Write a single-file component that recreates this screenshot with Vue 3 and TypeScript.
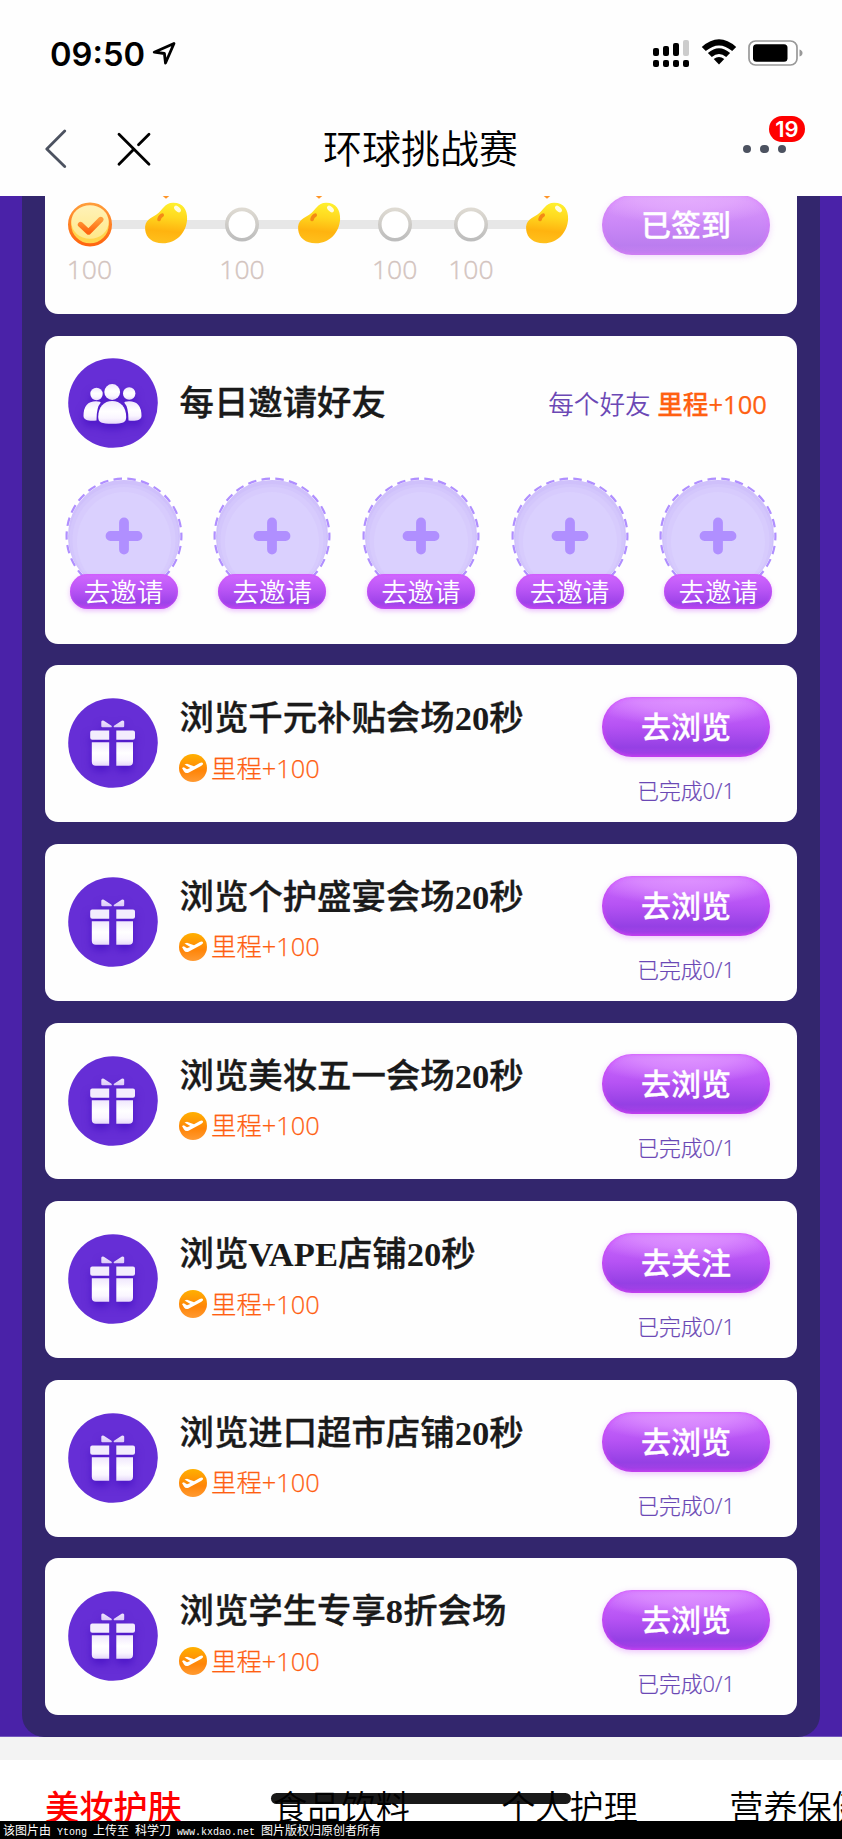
<script setup lang="ts">
interface Task {
  title: { text: string; latin?: boolean }[]
  action: string
}

const days = ['checked', 'bean', 'empty', 'bean', 'empty', 'empty', 'bean']
const invites = [1, 2, 3, 4, 5]
const tasks: Task[] = [
  { title: [{ text: '浏览千元补贴会场' }, { text: '20', latin: true }, { text: '秒' }], action: '去浏览' },
  { title: [{ text: '浏览个护盛宴会场' }, { text: '20', latin: true }, { text: '秒' }], action: '去浏览' },
  { title: [{ text: '浏览美妆五一会场' }, { text: '20', latin: true }, { text: '秒' }], action: '去浏览' },
  { title: [{ text: '浏览' }, { text: 'VAPE', latin: true }, { text: '店铺' }, { text: '20', latin: true }, { text: '秒' }], action: '去关注' },
  { title: [{ text: '浏览进口超市店铺' }, { text: '20', latin: true }, { text: '秒' }], action: '去浏览' },
  { title: [{ text: '浏览学生专享' }, { text: '8', latin: true }, { text: '折会场' }], action: '去浏览' },
]
const tabs = ['美妆护肤', '食品饮料', '个人护理', '营养保健']
</script>

<template>
  <div class="screen">
    <svg class="defs" width="0" height="0">
      <defs>
        <linearGradient id="bean" x1="0.55" y1="0" x2="0.45" y2="1">
          <stop offset="0" stop-color="#fff02e" /><stop offset="0.35" stop-color="#ffd81f" />
          <stop offset="0.7" stop-color="#ffb30f" /><stop offset="1" stop-color="#ffc01c" />
        </linearGradient>
        <linearGradient id="coin" x1="0" y1="0" x2="0" y2="1">
          <stop offset="0" stop-color="#ff9c3a" /><stop offset="1" stop-color="#ff650f" />
        </linearGradient>
        <linearGradient id="coinFill" x1="0" y1="0" x2="0" y2="1">
          <stop offset="0" stop-color="#fff2b8" /><stop offset="1" stop-color="#ffe88a" />
        </linearGradient>
        <linearGradient id="ring" x1="0" y1="0" x2="0" y2="1">
          <stop offset="0" stop-color="#dedad2" /><stop offset="1" stop-color="#bdbdbd" />
        </linearGradient>
        <linearGradient id="mile" x1="0" y1="0" x2="0" y2="1">
          <stop offset="0" stop-color="#ffb000" /><stop offset="0.6" stop-color="#ff8508" /><stop offset="1" stop-color="#ff9a32" />
        </linearGradient>
        <linearGradient id="soft" x1="0" y1="0" x2="0" y2="1">
          <stop offset="0" stop-color="#f0e7fd" /><stop offset="0.45" stop-color="#ffffff" /><stop offset="0.75" stop-color="#faf6ff" /><stop offset="1" stop-color="#e6d8fa" />
        </linearGradient>
        <linearGradient id="bow" x1="0" y1="0" x2="0" y2="1">
          <stop offset="0" stop-color="#eee4fd" /><stop offset="1" stop-color="#dccbf8" />
        </linearGradient>
      </defs>
    </svg>

    <header class="top">
      <div class="status">
        <span class="clock">09:50</span>
        <svg class="loc" width="24" height="24" viewBox="0 0 24 24" fill="none" stroke="#000" stroke-width="2.8" stroke-linejoin="round">
          <path d="M22 2.500 2.200 11.200 12.400 12.500 13.500 22Z" />
        </svg>
        <svg class="signal" width="38" height="28" viewBox="0 0 38 28">
          <rect x="1" y="8" width="6" height="8" rx="2" /><rect x="11" y="6" width="6" height="10" rx="2" />
          <rect x="21" y="3" width="6" height="13" rx="2" /><rect x="31" y="0" width="6" height="16" rx="2" fill="#ccc" />
          <rect x="1" y="20" width="6" height="7" rx="2" /><rect x="11" y="20" width="6" height="7" rx="2" />
          <rect x="21" y="20" width="6" height="7" rx="2" /><rect x="31" y="20" width="6" height="7" rx="2" />
        </svg>
        <svg class="wifi" width="36" height="26" viewBox="0 0 36 26">
          <path d="M0.800 8Q18-7.400 35.200 8L31.200 12Q18 .8 4.800 12Z" />
          <path d="M6.900 14Q18 4.600 29.100 14L25.200 17.900Q18 12 10.800 17.900Z" />
          <path d="M12.700 20Q18 16 23.300 20L18 25.600Z" />
        </svg>
        <svg class="battery" width="56" height="26" viewBox="0 0 56 26">
          <rect x="1" y="1" width="48" height="24" rx="6.500" fill="#fff" stroke="#999" stroke-width="1.700" />
          <rect x="5" y="4.300" width="34.500" height="17.500" rx="3.500" /><path d="M51.500 9.500Q54.500 10.500 54.500 13T51.500 16.500Z" fill="#999" />
        </svg>
      </div>
      <nav class="nav">
        <svg class="navicons" width="110" height="42" viewBox="45 128 110 42" fill="none" stroke-width="2.800" stroke-linecap="round" stroke-linejoin="round">
          <path d="M64.700 131 46.800 149 64.700 166.500" stroke="#4c5260" />
          <path d="M119 134.300 149 164.300M119 164.300 134 149M138.500 144.800 149 134.300" stroke="#000" />
        </svg>
        <h1>环球挑战赛</h1>
        <div class="more">
          <i></i><i></i><i></i>
          <b class="badge">19</b>
        </div>
      </nav>
    </header>

    <main class="stage">
      <section class="panel">
        <article class="card signin">
          <div class="track">
            <div v-for="(day, i) in days" :key="i" class="day">
              <svg v-if="day === 'checked'" width="46" height="56" viewBox="-23 -28 46 56">
                <circle r="20.400" cy="0.500" fill="#ffd54d" stroke="url(#coin)" stroke-width="3.200" />
                <ellipse cy="-2" rx="18.700" ry="16.800" fill="url(#coinFill)" />
                <path d="M-9.500 0.500-1.500 8 10.800-4.500" fill="none" stroke="url(#coin)" stroke-width="5.400" stroke-linecap="round" stroke-linejoin="round" />
              </svg>
              <svg v-else-if="day === 'bean'" width="46" height="56" viewBox="-23 -28 46 56">
                <path d="M-4.500-29H4.500L0-25.300Z" fill="#ff9528" />
                <path d="M-20.800 6C-22-4-14.500-6-9.500-9.500C-3-14-1.500-21.300 7-21.300C17-21.500 21.500-14 21.100-5C20.500 9 10 19.300-3 19.300C-13 19.500-20 14-20.800 6Z" fill="url(#bean)" />
                <path d="M-3.800-8.800C-6-8-6.500-6.500-7-4.500" fill="none" stroke="#f38a15" stroke-width="3.600" stroke-linecap="round" />
                <ellipse cx="11.500" cy="-15" rx="4" ry="2.400" transform="rotate(42 11.5 -15)" fill="#fff" opacity="0.850" />
              </svg>
              <svg v-else width="46" height="56" viewBox="-23 -28 46 56">
                <circle r="15.200" cy="0.600" fill="#fff" stroke="url(#ring)" stroke-width="3.600" />
              </svg>
              <span v-if="day !== 'bean'">100</span>
            </div>
          </div>
          <button class="pill done">已签到</button>
        </article>

        <article class="card invite">
          <div class="invite-head">
            <svg width="90" height="90" viewBox="0 0 90 90">
              <circle cx="45" cy="45" r="44.800" fill="#662ed6" />
              <g class="lift" fill="url(#soft)">
                <circle cx="28.500" cy="36" r="6.200" /><circle cx="61.200" cy="35.500" r="6.200" /><circle cx="44.200" cy="34" r="7.900" />
                <path d="M15.500 58Q15.500 43.200 28 43.200Q33.500 43.200 32.500 45Q28.500 49 28.500 62.500C22 63 15.500 62.800 15.500 58Z" />
                <path d="M73.500 58Q73.500 43.200 61 43.200Q55.500 43.200 56.500 45Q60.500 49 60.500 62.500C67 63 73.500 62.800 73.500 58Z" />
                <path d="M30.200 59C30.200 49 36 43 44.200 43S58.200 49 58.200 59C58.200 64.500 55 65.800 44.200 65.800S30.200 64.500 30.200 59Z" />
              </g>
            </svg>
            <h2>每日邀请好友</h2>
            <p>每个好友 <b>里程+100</b></p>
          </div>
          <div class="friends">
            <div v-for="n in invites" :key="n" class="friend">
              <svg width="118" height="118" viewBox="0 0 118 118">
                <circle cx="59" cy="59" r="56.800" fill="#cfc0fb" />
                <ellipse cx="59" cy="61" rx="54.500" ry="54" fill="#d3c6fc" />
                <ellipse cx="59" cy="63" rx="51.500" ry="53" fill="#d7cbfd" />
                <ellipse cx="59" cy="65" rx="47" ry="50" fill="#dad0fe" />
                <circle cx="59" cy="59" r="57.200" fill="none" stroke="#fff" stroke-width="2.400" />
                <circle cx="59" cy="59" r="57.400" fill="none" stroke="#b08fff" stroke-width="2.200" stroke-dasharray="8.500 5.370" stroke-dashoffset="4" />
                <path d="M59 45.500V72.500M45.500 59H72.500" stroke="#b08fff" stroke-width="9.800" stroke-linecap="round" />
              </svg>
              <button>去邀请</button>
            </div>
          </div>
        </article>

        <article v-for="(task, i) in tasks" :key="i" class="card task">
          <svg class="gift" width="90" height="90" viewBox="0 0 90 90">
            <circle cx="45" cy="45" r="44.800" fill="#662ed6" />
            <g class="lift">
              <path d="M33.300 23.500Q34.500 21.500 37 23.500L43.500 27.800Q44.500 29.300 42.500 29.300H34.300Q33.300 29.300 33.300 28.300ZM56.200 23.500Q55 21.500 52.500 23.500L46 27.800Q45 29.300 47 29.300H55.200Q56.200 29.300 56.200 28.300Z" fill="url(#bow)" />
              <path d="M24.200 32.500H41.200V41.800H24.200Q22.200 41.800 22.200 39.800V34.500Q22.200 32.500 24.200 32.500ZM48.300 32.500H65Q67 32.500 67 34.500V39.800Q67 41.800 65 41.800H48.300Z" fill="#f3edfd" />
              <path d="M23.800 44.300H41.200V67.800H27.800Q23.800 67.800 23.800 63.800ZM48.300 44.300H65V63.800Q65 67.800 61 67.800H48.300Z" fill="url(#soft)" />
            </g>
          </svg>
          <div class="info">
            <h2><span v-for="(part, p) in task.title" :key="p" :class="{ latin: part.latin }">{{ part.text }}</span></h2>
            <div class="miles">
              <svg width="28" height="28" viewBox="0 0 28 28">
                <circle cx="14" cy="14" r="14" fill="url(#mile)" />
                <path d="M3 14 4.800 13.300 8 15.300 11.300 13.900 5.500 10.500 8 9.700 15 12.200 20.800 9Q23.300 8 24 9.200T22 11.900L9.500 18.800Q6.500 19.800 5 17.500Z" fill="#fff" />
              </svg>
              <span>里程+100</span>
            </div>
          </div>
          <div class="act">
            <button class="pill">{{ task.action }}</button>
            <span>已完成0/1</span>
          </div>
        </article>
      </section>
    </main>

    <div class="divider"></div>
    <div class="tabs">
      <span v-for="(tab, i) in tabs" :key="tab" :class="{ active: i === 0 }">{{ tab }}</span>
    </div>
    <div class="home-bar"></div>
    <footer>该图片由<i> Ytong </i>上传至<i>&nbsp;</i>科学刀<i> www.kxdao.net </i>图片版权归原创者所有</footer>
  </div>
</template>

<style>
body { margin: 0; background: #fff; }
</style>

<style scoped>
* { box-sizing: border-box; }
.screen {
  position: relative;
  width: 842px;
  height: 1839px;
  overflow: hidden;
  display: flex;
  flex-direction: column;
  background: #fff;
  font-family: "Noto Sans CJK SC", sans-serif;
}
.defs { position: absolute; }
h1, h2, p { margin: 0; white-space: nowrap; }
button {
  border: 0;
  padding: 0;
  color: #fff;
  font-family: inherit;
  white-space: nowrap;
}
.top { height: 196px; flex: none; background: #fefefe; }
.status { height: 108px; display: flex; align-items: center; padding-left: 50px; }
.clock { width: 102px; padding-bottom: 1px; font: 600 32.700px/40px Inter, sans-serif; }
.loc { margin-top: -3px; }
.signal { margin-left: 475.500px; margin-top: -1px; }
.wifi { margin-left: 11.500px; margin-top: -4px; }
.battery { margin-left: 11px; margin-top: -2px; }
.nav { height: 82px; display: flex; align-items: center; padding: 0 37px 0 45px; }
.navicons { flex: none; width: 110px; }
h1 {
  width: 196px;
  margin: -6px 0 0 168px;
  font-size: 39px;
  line-height: 50px;
  font-weight: 350;
  color: #000;
}
.more { position: relative; width: 44px; margin-left: 224px; display: flex; gap: 9.300px; }
.more i { width: 8.200px; height: 8.200px; border-radius: 50%; background: #4c5260; }
.badge {
  position: absolute;
  left: 26px;
  top: -28.500px;
  width: 36px;
  height: 26px;
  border-radius: 13px;
  background: #f00;
  color: #fff;
  text-align: center;
  font: 600 22px/27px Inter, sans-serif;
}
.stage { flex: none; height: 1541px; padding: 0 22px; background: #4a22a8; border-bottom: 1px solid #7357bd; }
.panel {
  height: 1541px;
  padding: 0 23px 0 22.500px;
  border-radius: 0 0 22px 22px;
  background: #33266d;
  display: flex;
  flex-direction: column;
  gap: 21.800px;
}
.card { flex: none; border-radius: 13px; background: #fefefe; }
.signin {
  height: 118px;
  overflow: hidden;
  border-radius: 0 0 13px 13px;
  display: flex;
  align-items: flex-start;
}
.track {
  width: 534px;
  margin-left: 7px;
  display: flex;
  background: linear-gradient(#e7e7e7, #e7e7e7) 38px 24px / 458px 9px no-repeat;
}
.day { width: 76.300px; display: flex; flex-direction: column; align-items: center; flex: none; height: 100px; }
.day span {
  margin: -0.500px 0.500px 0 0;
  font-family: "Open Sans", sans-serif;
  font-size: 26.500px;
  line-height: 34px;
  font-weight: 300;
  color: #d3c4bf;
  -webkit-text-stroke: 0.400px #d3c4bf;
}
.pill {
  width: 168px;
  height: 60px;
  border-radius: 30px;
  padding-bottom: 3px;
  font-size: 30px;
  line-height: 57px;
  font-weight: 500;
  -webkit-text-stroke: 0.300px #fff;
  background:
    radial-gradient(ellipse 100px 30px at 50% 0, #de94ff 0, rgba(222, 148, 255, 0.7) 50%, rgba(222, 148, 255, 0) 100%),
    linear-gradient(#cf6dff, #b653f4 48%, #9540e4 84%, #a841e8);
  box-shadow: 0 2px 6px rgba(205, 90, 250, 0.35), inset 0 -1px 3px #c63dee, inset 2px 0 4px rgba(216, 75, 255, 0.35), inset -2px 0 4px rgba(216, 75, 255, 0.35);
}
.signin .pill { margin: -1px 0 0 16.500px; flex: none; color: #fff; }
.signin .done {
  background:
    radial-gradient(ellipse 100px 30px at 50% 0, #e4adfd 0, rgba(228, 173, 253, 0.7) 50%, rgba(228, 173, 253, 0) 100%),
    linear-gradient(#dc98fc, #cb88f7 48%, #bb7def 84%, #c681f1);
  box-shadow: 0 2px 6px rgba(215, 130, 250, 0.3), inset 0 -1px 3px #d07df3, inset 2px 0 4px rgba(220, 125, 255, 0.35), inset -2px 0 4px rgba(220, 125, 255, 0.35);
}
.invite { height: 307.800px; padding-top: 22px; }
.invite-head { display: flex; align-items: center; padding: 0 30px 0 23px; height: 90px; }
h2 { font-size: 34.400px; line-height: 48px; font-weight: 500; color: #1a1a1a; -webkit-text-stroke: 0.350px #1a1a1a; }
.invite-head h2 { margin: -5px 0 0 22px; }
.invite-head p { margin-left: auto; font-family: "Open Sans", "Noto Sans CJK SC", sans-serif; font-size: 25.600px; line-height: 36px; color: #6b48b5; font-weight: 350; padding-top: 3.500px; }
.invite-head b { font-weight: 500; color: #ff6011; -webkit-text-stroke: 0.250px #ff6011; }
.friends { display: flex; margin: 29px 0 0 20px; gap: 30.700px; }
.friend { width: 118px; height: 133px; display: flex; flex-direction: column; align-items: center; }
.friend svg { flex: none; }
.friend button {
  position: relative;
  flex: none;
  width: 108px;
  height: 35.500px;
  margin-top: -21px;
  padding-bottom: 2px;
  border-radius: 18px;
  font-size: 26.500px;
  line-height: 33px;
  font-weight: 350;
  background: linear-gradient(#d169ff, #b955f5 45%, #9e43e9 82%, #b944ef);
  box-shadow: 0 2px 5px rgba(205, 90, 250, 0.38), inset 0 0 3px #cf4df8;
}
.task { height: 156.800px; display: flex; padding: 0 27px 0 23px; }
.gift { margin-top: 33px; flex: none; }
.lift { filter: drop-shadow(0 5px 4px rgba(62, 8, 190, 0.65)); }
.info { margin: 26px 0 0 22px; display: flex; flex-direction: column; }
.latin { font-family: "Liberation Serif", serif; font-weight: 700; font-size: 34.600px; line-height: 1; -webkit-text-stroke: 0; }
.miles { display: flex; align-items: center; height: 36px; margin: 10.500px 0 0 -1px; }
.miles svg { flex: none; margin-top: 1px; }
.miles span {
  margin: 0 0 0 4.500px;
  font-family: "Open Sans", "Noto Sans CJK SC", sans-serif;
  font-size: 25.400px;
  line-height: 36px;
  font-weight: 325;
  color: #ff5e12;
  -webkit-text-stroke: 0.250px #ff5e12;
}
.act { margin: 31.800px 0 0 auto; width: 168px; display: flex; flex-direction: column; align-items: center; }
.act span {
  margin-top: 18px;
  font-family: "Open Sans", "Noto Sans CJK SC", sans-serif;
  font-size: 21.800px;
  line-height: 32px;
  font-weight: 325;
  color: #6b48b5;
  -webkit-text-stroke: 0.200px #6b48b5;
}
.divider { flex: none; height: 23px; background: #f3f3f3; }
.tabs { flex: none; height: 61px; display: flex; gap: 91.300px; padding: 21px 0 0 45px; overflow: hidden; }
.tabs span { flex: none; font-size: 34.200px; line-height: 48px; color: #000; font-weight: 350; white-space: nowrap; }
.tabs .active { color: #f00; font-weight: 500; }
.home-bar {
  position: absolute;
  left: 271px;
  top: 1793px;
  width: 300px;
  height: 11px;
  border-radius: 6px;
  background: rgba(0, 0, 0, 0.9);
}
footer {
  flex: none;
  height: 18px;
  padding-left: 3px;
  background: #000;
  color: #fff;
  font: 12px/17px "Noto Sans CJK SC", sans-serif;
  white-space: pre;
}
footer i { font: 10px/17px "Liberation Mono", monospace; }
</style>
